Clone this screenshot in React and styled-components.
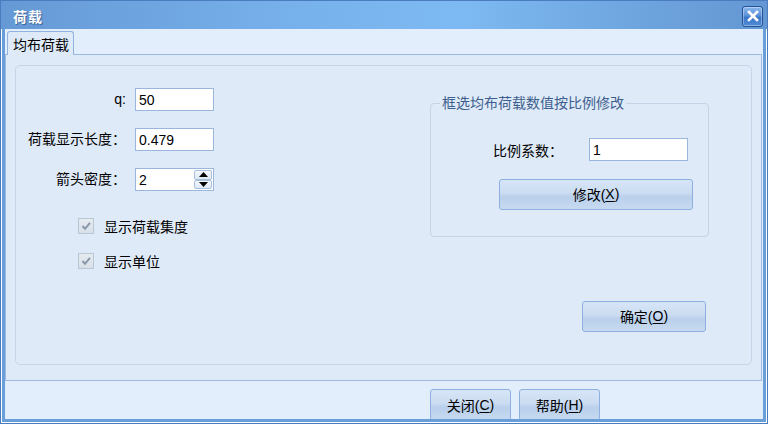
import React from 'react';
import styled, { createGlobalStyle } from 'styled-components';

// global
const GlobalStyle = createGlobalStyle`
  html, body {
    margin: 0;
    padding: 0;
    background: #ffffff;
  }
  * {
    box-sizing: border-box;
  }
`;

const FONT = `"Liberation Sans", "Noto Sans CJK SC", sans-serif`;

const App = () => (
  <>
    <GlobalStyle />
    <Window>
      <TitleBar>
        <Title>荷载</Title>
        <CloseButton aria-label="close">
          <svg width="12" height="12" viewBox="0 0 12 12">
            <path d="M2 2 L10 10 M10 2 L2 10" stroke="#fff" strokeWidth="2.6" strokeLinecap="square" />
          </svg>
        </CloseButton>
      </TitleBar>

      <Client>
        <TabStrip>
          <Tab>均布荷载</Tab>
        </TabStrip>

        <Panel>
          <GroupBox>
            <LeftColumn>
              <FormGrid>
                <Label>q:</Label>
                <TextInput defaultValue="50" />

                <Label>荷载显示长度：</Label>
                <TextInput defaultValue="0.479" />

                <Label>箭头密度：</Label>
                <SpinBox>
                  <SpinInput defaultValue="2" />
                  <SpinButtons>
                    <SpinButton>
                      <svg width="9" height="5" viewBox="0 0 9 5"><path d="M0 5 L4.5 0 L9 5 Z" fill="#000" /></svg>
                    </SpinButton>
                    <SpinButton>
                      <svg width="9" height="5" viewBox="0 0 9 5"><path d="M0 0 L4.5 5 L9 0 Z" fill="#000" /></svg>
                    </SpinButton>
                  </SpinButtons>
                </SpinBox>
              </FormGrid>

              <CheckList>
                <CheckRow>
                  <CheckBox />
                  <span>显示荷载集度</span>
                </CheckRow>
                <CheckRow>
                  <CheckBox />
                  <span>显示单位</span>
                </CheckRow>
              </CheckList>
            </LeftColumn>

            <RightColumn>
              <FieldSet>
                <Legend>框选均布荷载数值按比例修改</Legend>
                <FieldBody>
                  <FieldRow>
                    <FieldLabel>比例系数：</FieldLabel>
                    <TextInput defaultValue="1" $width={99} />
                  </FieldRow>
                  <Button $width={194} $left={68} $top={18}>
                    修改(<u>X</u>)
                  </Button>
                </FieldBody>
              </FieldSet>

              <Button $width={124} $left={152} $top={64}>
                确定(<u>O</u>)
              </Button>
            </RightColumn>
          </GroupBox>
        </Panel>

        <Footer>
          <Button $width={81} $height={32}>关闭(<u>C</u>)</Button>
          <Button $width={81} $height={32}>帮助(<u>H</u>)</Button>
        </Footer>
      </Client>
    </Window>
  </>
);

const CheckBox = () => (
  <CheckFrame>
    <svg width="12" height="12" viewBox="0 0 12 12">
      <path d="M2.5 6 L5 8.8 L10 2.8" stroke="#8797a8" strokeWidth="2" fill="none" />
    </svg>
  </CheckFrame>
);

export default App;

const Window = styled.div`
  width: 768px;
  height: 424px;
  display: flex;
  flex-direction: column;
  border: 1px solid #4c7cc0;
  background: #6a9ed8;
  box-shadow: inset 0 0 0 1px #ffffff;
  font-family: ${FONT};
  font-size: 14px;
  color: #000;
  overflow: hidden;
`;

const TitleBar = styled.div`
  height: 28px;
  flex: none;
  display: flex;
  align-items: center;
  justify-content: space-between;
  padding: 0 4px 0 12px;
  background: linear-gradient(90deg, #6599d5 0%, #78b2ec 40%, #7db9f2 60%, #6a9fd9 90%, #6397d3 100%);
`;

const Title = styled.div`
  color: #ffffff;
  font-weight: bold;
  font-size: 14px;
  letter-spacing: 1px;
  text-shadow: 1px 1px 1px #3a5f94;
  margin-top: 1px;
`;

const CloseButton = styled.div`
  width: 21px;
  height: 21px;
  margin-top: 2px;
  display: flex;
  align-items: center;
  justify-content: center;
  border: 1px solid #24529a;
  border-radius: 3px;
  background: linear-gradient(180deg, #8bb8ec 0%, #5a91d6 45%, #3a76c6 55%, #4f8bd6 100%);
  box-shadow: inset 0 0 0 1px rgba(255, 255, 255, 0.35);
`;

const Client = styled.div`
  flex: 1;
  margin: 0 4px 4px 4px;
  background: #e2eefc;
  display: flex;
  flex-direction: column;
  min-height: 0;
`;

const TabStrip = styled.div`
  height: 25px;
  flex: none;
  display: flex;
  align-items: flex-end;
  padding-left: 2px;
`;

const Tab = styled.div`
  height: 24px;
  padding: 0 4px 0 5px;
  display: flex;
  align-items: center;
  border: 1px solid #8fb2de;
  border-bottom: none;
  border-radius: 3px 3px 0 0;
  background: #dfeaf8;
  margin-bottom: -1px;
  position: relative;
  z-index: 1;
`;

const Panel = styled.div`
  height: 327px;
  flex: none;
  margin-right: 1px;
  border: 1px solid #9dbbe2;
  background: #dfeaf8;
  padding: 10px 9px 15px 9px;
  display: flex;
`;

const GroupBox = styled.div`
  flex: 1;
  border: 1px solid #c6d5e8;
  border-radius: 5px;
  display: grid;
  grid-template-columns: 414px 1fr;
`;

const LeftColumn = styled.div`
  padding-top: 22px;
`;

const FormGrid = styled.div`
  display: grid;
  grid-template-columns: 110px 79px;
  column-gap: 9px;
  row-gap: 17px;
  align-items: center;
`;

const Label = styled.div`
  text-align: right;
  white-space: nowrap;
  line-height: 23px;
`;

const TextInput = styled.input`
  width: ${p => (p.$width ? `${p.$width}px` : '100%')};
  height: 23px;
  border: 1px solid #9ab6dc;
  background: #ffffff;
  padding: 0 3px;
  font-family: ${FONT};
  font-size: 14px;
  color: #000;
  outline: none;
`;

const SpinBox = styled.div`
  height: 23px;
  display: flex;
  border: 1px solid #9ab6dc;
  background: #ffffff;
`;

const SpinInput = styled.input`
  flex: 1;
  min-width: 0;
  border: none;
  padding: 0 3px;
  font-family: ${FONT};
  font-size: 14px;
  outline: none;
  background: transparent;
`;

const SpinButtons = styled.div`
  width: 20px;
  display: flex;
  flex-direction: column;
  padding: 1px;
`;

const SpinButton = styled.div`
  flex: 1;
  display: flex;
  align-items: center;
  justify-content: center;
  border: 1px solid #a8bfdc;
  border-radius: 2px;
  background: linear-gradient(180deg, #f4f8fd 0%, #dde8f6 100%);
`;

const CheckList = styled.div`
  margin-top: 27px;
  padding-left: 62px;
  display: flex;
  flex-direction: column;
  gap: 19px;
`;

const CheckRow = styled.div`
  display: flex;
  align-items: center;
  gap: 10px;
  height: 16px;
`;

const CheckFrame = styled.div`
  width: 16px;
  height: 16px;
  display: flex;
  align-items: center;
  justify-content: center;
  border: 1px solid #b9c6d4;
  background: linear-gradient(180deg, #e6ebf1 0%, #d9e0e8 100%);
`;

const RightColumn = styled.div`
  padding-top: 29px;
  display: flex;
  flex-direction: column;
  align-items: flex-start;
`;

const FieldSet = styled.fieldset`
  width: 279px;
  margin: 0;
  padding: 0;
  border: 1px solid #c4d3e6;
  border-radius: 4px;
`;

const Legend = styled.legend`
  margin-left: 9px;
  padding: 0 2px;
  color: #3e5f8e;
  font-size: 14px;
  line-height: 17px;
`;

const FieldBody = styled.div`
  padding: 26px 0 26px 0;
`;

const FieldRow = styled.div`
  display: flex;
  align-items: center;
  padding-left: 62px;
`;

const FieldLabel = styled.div`
  width: 96px;
`;

const Button = styled.div`
  width: ${p => p.$width}px;
  height: ${p => p.$height || 31}px;
  margin-left: ${p => p.$left || 0}px;
  margin-top: ${p => p.$top || 0}px;
  flex: none;
  display: flex;
  align-items: center;
  justify-content: center;
  border: 1px solid #8db0e0;
  border-radius: 3px;
  background: linear-gradient(180deg, #d7e5f6 0%, #cbdcf2 45%, #b9cfeb 58%, #c7daf1 100%);
  font-size: 14px;
  color: #000;
  padding-bottom: 1px;

  u {
    text-decoration-thickness: 1px;
    text-underline-offset: 2px;
  }
`;

const Footer = styled.div`
  flex: 1;
  min-height: 0;
  overflow: hidden;
  display: flex;
  align-items: flex-start;
  gap: 8px;
  padding: 8px 0 0 425px;
`;
